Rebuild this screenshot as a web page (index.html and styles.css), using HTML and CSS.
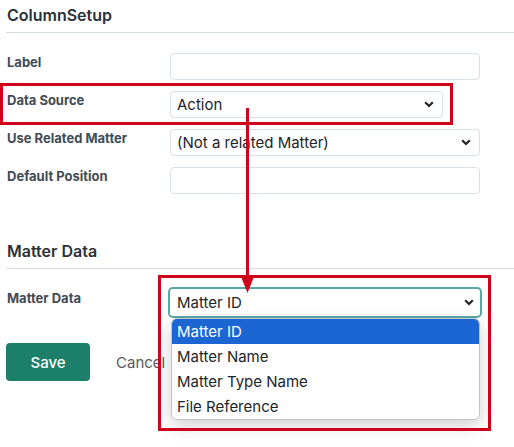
FILE: index.html
```html
<!DOCTYPE html>
<html lang="en">
<head>
    <meta charset="UTF-8">
    <title>Column Setup</title>
    <link rel="stylesheet" href="styles.css">
</head>
<body>
<div class="pagina">

    <h2 class="titolo-sezione">ColumnSetup</h2>

    <div class="form-campi">
        <div class="riga">
            <label class="etichetta">Label</label>
            <input type="text" class="campo">
        </div>
        <div class="riga">
            <label class="etichetta">Data Source</label>
            <div class="select-box stretto">
                <span>Action</span>
                <svg class="freccia" width="10" height="7" viewBox="0 0 10 7"><path d="M1.2 1.3 5 5 8.8 1.3" fill="none" stroke="#222" stroke-width="2.2"/></svg>
            </div>
        </div>
        <div class="riga">
            <label class="etichetta">Use Related Matter</label>
            <div class="select-box">
                <span>(Not a related Matter)</span>
                <svg class="freccia" width="10" height="7" viewBox="0 0 10 7"><path d="M1.2 1.3 5 5 8.8 1.3" fill="none" stroke="#222" stroke-width="2.2"/></svg>
            </div>
        </div>
        <div class="riga">
            <label class="etichetta">Default Position</label>
            <input type="text" class="campo">
        </div>
    </div>

    <h2 class="titolo-sezione secondo">Matter Data</h2>

    <div class="riga riga-matter">
        <label class="etichetta">Matter Data</label>
        <div class="select-box attivo">
            <span>Matter ID</span>
            <svg class="freccia" width="10" height="7" viewBox="0 0 10 7"><path d="M1.2 1.3 5 5 8.8 1.3" fill="none" stroke="#222" stroke-width="2.2"/></svg>
        </div>
    </div>

    <div class="bottoni">
        <button type="button" class="bottone-salva">Save</button>
        <span class="bottone-annulla">Cancel</span>
    </div>

    <!-- menu aperto della select -->
    <ul class="menu-opzioni">
        <li class="selezionata">Matter ID</li>
        <li>Matter Name</li>
        <li>Matter Type Name</li>
        <li>File Reference</li>
    </ul>

    <!-- annotazioni rosse -->
    <div class="riquadro riquadro-1"></div>
    <div class="riquadro riquadro-2"></div>
    <svg class="freccia-rossa" width="20" height="190" viewBox="0 0 20 190">
        <rect x="8" y="0" width="3" height="172" fill="#d0021b"/>
        <polygon points="3.5,170 15.5,170 9.5,185" fill="#d0021b"/>
    </svg>

</div>
</body>
</html>
```

FILE: styles.css
```css
body {
    margin: 0;
    font-family: Inter, "Noto Sans", Arial, sans-serif;
    background-color: #fff;
    color: #212529;
}

.pagina {
    position: relative;
    height: 447px;
    overflow: hidden;
    padding-left: 6px;
}

.titolo-sezione {
    margin: 0;
    padding: 5px 0 7px 1px;
    font-size: 16px;
    line-height: 20px;
    font-weight: 600;
    color: #2c3136;
    border-bottom: 1px solid #d5dce3;
}

.titolo-sezione.secondo {
    margin-top: 42px;
}

.form-campi {
    display: flex;
    flex-direction: column;
    gap: 11px;
    margin-top: 20px;
}

.riga {
    display: flex;
    align-items: flex-start;
}

.etichetta {
    width: 163px;
    padding-left: 1px;
    padding-top: 0;
    font-size: 13px;
    line-height: 18px;
    font-weight: 700;
    color: #414b55;
}

.campo,
.select-box {
    box-sizing: border-box;
    width: 310px;
    height: 27px;
    border: 1px solid #d9e0e6;
    border-radius: 4px;
    background: #fff;
    font-family: inherit;
    font-size: 15px;
    color: #212529;
}

.select-box {
    display: flex;
    align-items: center;
    justify-content: space-between;
    padding: 0 8px 0 6px;
}

.select-box.stretto {
    width: 273px;
}

.riga-matter {
    margin-top: 18px;
}

.riga-matter .etichetta {
    padding-top: 2px;
    width: 161px;
}

.select-box.attivo {
    width: 314px;
    height: 31px;
    border: 2px solid #58a9a6;
    border-radius: 5px;
    padding-left: 7px;
    padding-right: 6px;
}

.bottoni {
    display: flex;
    align-items: center;
    gap: 26px;
    margin-top: 25px;
}

.bottone-salva {
    width: 84px;
    height: 38px;
    border: none;
    border-radius: 4px;
    background-color: #1c7f6a;
    color: #fff;
    font-family: inherit;
    font-size: 15px;
    font-weight: 500;
}

.bottone-annulla {
    font-size: 15px;
    color: #555b61;
}

.menu-opzioni {
    position: absolute;
    left: 171px;
    top: 318px;
    width: 309px;
    margin: 0;
    padding: 0;
    list-style: none;
    background: #fff;
    border: 1px solid #c3c6c9;
    border-radius: 6px;
    box-shadow: 0 6px 18px rgba(0, 0, 0, 0.18);
    overflow: hidden;
    box-sizing: border-box;
}

.menu-opzioni li {
    height: 25px;
    line-height: 25px;
    padding-left: 5px;
    font-size: 15px;
    color: #212529;
}

.menu-opzioni li.selezionata {
    background-color: #1b66d3;
    color: #fff;
}

.riquadro {
    position: absolute;
    border: 3px solid #d0021b;
    box-sizing: border-box;
}

.riquadro-1 {
    left: 0;
    top: 83px;
    width: 453px;
    height: 42px;
}

.riquadro-2 {
    left: 158px;
    top: 275px;
    width: 333px;
    height: 156px;
}

.freccia-rossa {
    position: absolute;
    left: 238px;
    top: 108px;
}
```
